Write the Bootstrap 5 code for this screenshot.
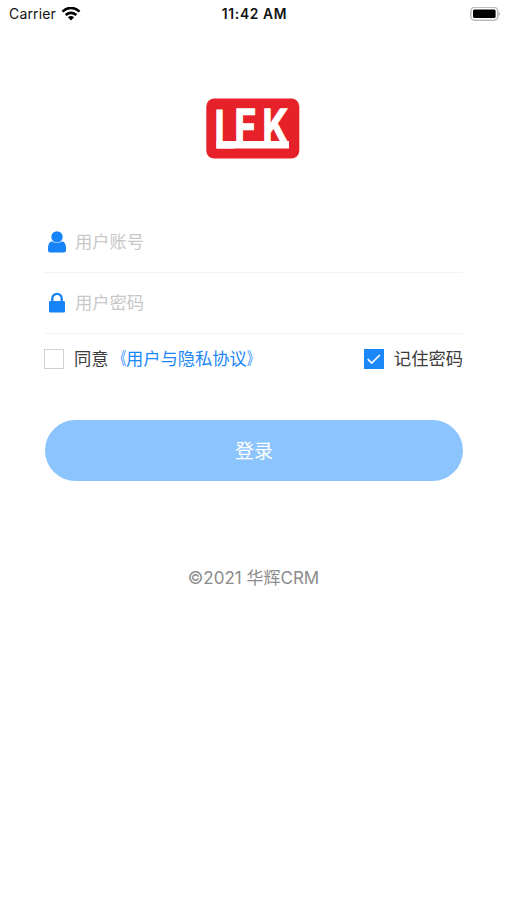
<!DOCTYPE html>
<html lang="zh-CN">
<head>
<meta charset="utf-8">
<meta name="viewport" content="width=device-width, initial-scale=1">
<title>华辉CRM</title>
<link href="https://cdn.jsdelivr.net/npm/bootstrap@5.3.0/dist/css/bootstrap.min.css" rel="stylesheet">
<style>
  body { font-family: Inter, "Noto Sans CJK SC", sans-serif; font-size: 17.3px; color: #3c3c3c; background: #fff; min-height: 900px; }
  svg { display: block; flex: none; }
  .status-bar { height: 28px; padding: 0 6px 0 9px; color: #111; font-size: 14px; line-height: 28px; }
  .carrier { letter-spacing: .15px; }
  .wifi { margin-left: 5px; }
  .status-time { font-size: 13.8px; font-weight: 600; letter-spacing: .65px; margin-right: 1px; }
  .brand { margin: 70px 0 52px 206px; }
  .login-form { padding: 0 44px; }
  .field { height: 62px; border-bottom: 1px solid #f3f3f3; padding-left: 4px; }
  .field + .field { height: 61px; }
  .field .form-control { padding: 0; margin-left: 9px; font-size: 17.3px; line-height: 26px; }
  .field .form-control::placeholder { color: #c8c8c8; opacity: 1; }
  .options { height: 50px; line-height: 26px; }
  .options label { margin-left: 10px; }
  .options a { color: #1c88f7; }
  .bracket { display: inline-block; transform: scaleX(.68); transform-origin: left; }
  .bracket-open { transform-origin: right; }
  .options .form-check-input { width: 20px; height: 20px; border: 1.5px solid #d0d0d0; border-radius: 0; }
  .options .form-check-input:checked { background-color: #1c88f7; border-color: #1c88f7;
    background-image: url("data:image/svg+xml,%3csvg xmlns='http://www.w3.org/2000/svg' viewBox='0 0 20 20'%3e%3cpath fill='none' stroke='%23fff' stroke-width='1.8' d='M3 10.200l4.500 4.300 9-9'/%3e%3c/svg%3e"); }
  .btn-login { height: 61px; margin: 36px 0 0 1px; padding: 4px 0 0; width: 418px; background: #8cc4fe; color: #fff; font-size: 19px; }
  .copyright { margin-top: 84px; line-height: 26px; font-size: 17px; color: #8c8c8c; }
</style>
</head>
<body>
<header class="status-bar d-flex align-items-center">
  <div class="col d-flex align-items-center">
    <span class="carrier">Carrier</span>
    <svg class="wifi" width="20" height="14" viewBox="0 0 20 14" fill="none" stroke="#000" stroke-width="2.500">
      <path d="M1.400 4.600Q10-2.800 18.600 4.600M4.600 8q5.400-4.300 10.800 0"/>
      <path d="M10 13.400L6.900 10.300q3.100-2.400 6.200 0z" fill="#000" stroke="none"/>
    </svg>
  </div>
  <span class="status-time">11:42 AM</span>
  <div class="col d-flex justify-content-end">
    <svg width="31" height="15" viewBox="0 0 31 15">
      <rect x=".8" y=".3" width="27" height="13" rx="4" fill="#fff" stroke="#bcbcbc" stroke-width="1.500"/>
      <rect x="3" y="2.500" width="22.600" height="8.600" rx="1.500"/>
      <path d="M28.700 4.500q2.300 2.300 0 4.600z" fill="#aaa"/>
    </svg>
  </div>
</header>
<main>
  <svg class="brand" width="94" height="61" viewBox="0 0 94 61" role="img" aria-label="LFK">
    <rect x=".3" y=".5" width="93" height="60" rx="8" fill="#e62129"/>
    <path d="M10.500 43H83v7.500H10.500z" fill="#fff"/>
    <g fill="#fff" stroke="#fff" stroke-width="1.300" font-family="Inter, sans-serif" font-weight="700" font-size="45">
      <text transform="translate(8.500 49.800) scale(.8 1.170)" stroke-width="1">L</text>
      <text transform="translate(28.500 44) scale(.82 1)">F</text>
      <text transform="translate(56.500 44) scale(.79 1)">K</text>
    </g>
  </svg>
  <form class="login-form">
    <div class="field d-flex align-items-center">
      <svg width="18" height="22" viewBox="0 0 18 22" fill="#1684f8">
        <circle cx="9" cy="5.900" r="5.700"/>
        <path d="M3.500 10.300q5.500 3.500 11 0 3.500 1.800 3.500 6.800v2.200q0 2.200-2.200 2.200H2.200Q0 21.500 0 19.300v-2.200q0-5 3.500-6.800z"/>
      </svg>
      <input class="form-control border-0 shadow-none bg-transparent" type="text" placeholder="用户账号" aria-label="用户账号">
    </div>
    <div class="field d-flex align-items-center">
      <svg width="18" height="23" viewBox="0 0 18 23" fill="#1684f8">
        <path d="M4.300 11V6.500a4.700 4.700 0 0 1 9.400 0V11" fill="none" stroke="#1684f8" stroke-width="2.300"/>
        <rect x="1" y="9" width="16" height="11.500" rx="1.300"/>
      </svg>
      <input class="form-control border-0 shadow-none bg-transparent" type="password" placeholder="用户密码" aria-label="用户密码">
    </div>
    <div class="options d-flex justify-content-between align-items-center">
      <div class="d-flex align-items-center">
        <input class="form-check-input m-0 shadow-none" id="agree" type="checkbox">
        <label for="agree">同意</label><a href="#" class="text-decoration-none"><span class="bracket bracket-open">《</span>用户与隐私协议<span class="bracket">》</span></a>
      </div>
      <div class="d-flex align-items-center">
        <input class="form-check-input m-0 shadow-none" id="remember" type="checkbox" checked>
        <label for="remember">记住密码</label>
      </div>
    </div>
    <button type="button" class="btn btn-login rounded-pill border-0">登录</button>
  </form>
  <footer class="copyright text-center">©2021 华辉CRM</footer>
</main>
<script src="https://cdn.jsdelivr.net/npm/bootstrap@5.3.0/dist/js/bootstrap.bundle.min.js"></script>
</body>
</html>
